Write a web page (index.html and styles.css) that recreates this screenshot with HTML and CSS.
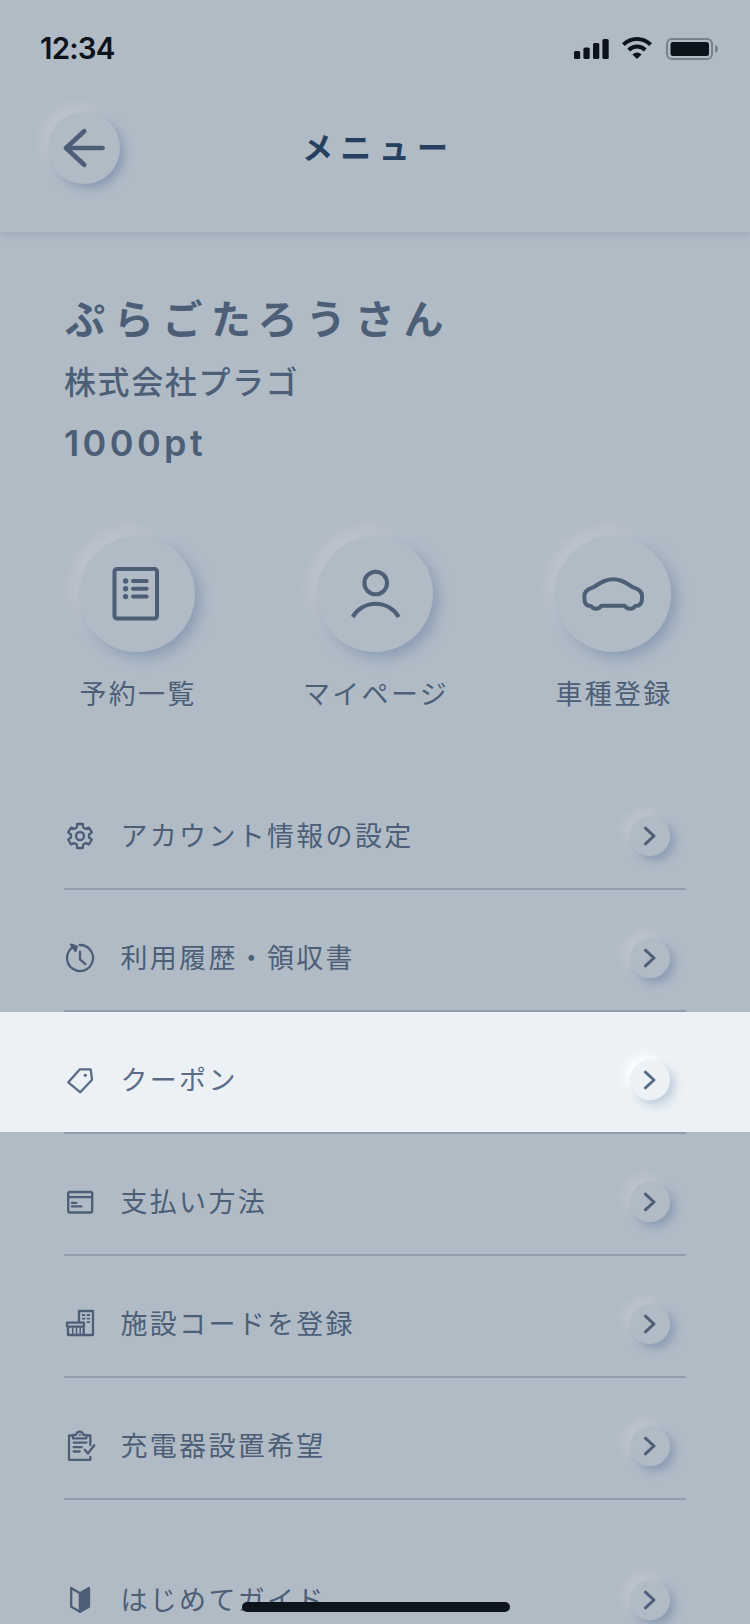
FILE: index.html
```html
<!DOCTYPE html>
<html lang="ja">
<head>
<meta charset="utf-8">
<title>メニュー</title>
<link rel="stylesheet" href="styles.css">
</head>
<body>
<svg class="defs" width="0" height="0" aria-hidden="true">
  <symbol id="chevron" viewBox="0 0 40 40"><path d="M15.4 12.2 24 20l-8.6 7.8" fill="none" stroke="currentColor" stroke-width="3" stroke-linecap="round" stroke-linejoin="round"/></symbol>
</svg>
<div class="screen">
  <header class="header">
    <div class="status">
      <span class="time">12:34</span>
      <svg class="status-icons" viewBox="0 0 144 24" fill="currentColor">
        <rect x="0" y="15" width="6.2" height="8" rx="1.6"/><rect x="9.4" y="11.5" width="6.3" height="11.5" rx="1.6"/><rect x="19" y="7" width="6.3" height="16" rx="1.6"/><rect x="28.4" y="3" width="6.3" height="20" rx="1.6"/>
        <g fill="none" stroke="currentColor" stroke-width="4"><path d="M49.4 8.6Q55.3 3 63 3t13.600 5.600"/><path d="M54.700 14Q58.300 10.600 63 10.600t8.300 3.400"/></g>
        <path d="M58.400 18.600Q63 14.500 67.600 18.600L63 23z"/>
        <rect x="93" y="3" width="45" height="20" rx="5" fill="none" stroke="#78828e" stroke-width="2"/>
        <rect x="96.500" y="6" width="38.500" height="14" rx="2.500"/>
        <path d="M141 9q3 1.200 3 4t-3 4z" fill="#78828e"/>
      </svg>
    </div>
    <div class="nav">
      <button class="round back" aria-label="戻る"><svg viewBox="0 0 72 72"><path d="M54.600 36H18M36.200 19.200 18 36l18.200 16.800" fill="none" stroke="currentColor" stroke-width="4.700" stroke-linecap="round" stroke-linejoin="round"/></svg></button>
      <h1 class="title">メニュー</h1>
    </div>
  </header>

  <section class="profile">
    <p class="name">ぷらごたろうさん</p>
    <p class="company">株式会社プラゴ</p>
    <p class="points">1000pt</p>
  </section>

  <nav class="shortcuts">
    <a class="shortcut"><span class="round big"><svg viewBox="0 0 116 116" fill="none" stroke="currentColor" stroke-width="4" stroke-linecap="round"><rect x="35.500" y="33" width="42.500" height="49.500" rx="2.500"/><path d="M54 45h13.700M54 52.800h13.700M54 60.600h13.700"/><g fill="currentColor" stroke="none"><circle cx="46.600" cy="45" r="2.700"/><circle cx="46.600" cy="52.800" r="2.700"/><circle cx="46.600" cy="60.600" r="2.700"/></g></svg></span><span class="label">予約一覧</span></a>
    <a class="shortcut"><span class="round big"><svg viewBox="0 0 116 116" fill="none" stroke="currentColor" stroke-width="4"><circle cx="58.700" cy="47" r="11.300"/><path d="M35.700 81a26.500 26.500 0 0 1 46 0"/></svg></span><span class="label">マイページ</span></a>
    <a class="shortcut"><span class="round big"><svg viewBox="0 0 116 116" fill="none" stroke="currentColor" stroke-width="4" stroke-linejoin="round"><path d="M46.500 69.700H69.500L71.300 71.500Q75.200 74 79 71.500L80.300 70Q87 70 87 62.500V60Q87 54.300 79 51.700C75 50.500 69.500 43.300 58.200 43.300S41.400 50.500 37.400 51.700Q29.400 54.300 29.400 60V62.500Q29.400 70 36 70L37.300 71.500Q41 74 44.700 71.500Z"/></svg></span><span class="label">車種登録</span></a>
  </nav>

  <ul class="menu">
    <li class="item"><svg class="icon" viewBox="0 0 32 32"><g transform="translate(16 16)"><path d="M-3.200-8.600-2.800-12H2.800L3.200-8.600 5.850-7.070 8.990-8.420 11.790-3.580 9.050-1.530V1.530L11.790 3.580 8.990 8.420 5.850 7.070 3.200 8.600 2.800 12H-2.800L-3.200 8.600-5.850 7.070-8.990 8.420-11.790 3.580-9.050 1.530V-1.530L-11.790-3.580-8.990-8.420-5.850-7.070Z"/><circle r="4"/></g></svg><span class="text">アカウント情報の設定</span><span class="round go"><svg><use href="#chevron"/></svg></span></li>
    <li class="item"><svg class="icon" viewBox="0 0 32 32"><path d="M15.600 3A13 13 0 1 1 8.500 5.400M16 9.700v7.600l5.400 4.800"/><path d="M7 2.700l5.800 1.800-1.300 4.300z" fill="currentColor"/></svg><span class="text">利用履歴・領収書</span><span class="round go"><svg><use href="#chevron"/></svg></span></li>
    <li class="item active"><svg class="icon" viewBox="0 0 32 32"><path d="M4.300 18.300 15.700 5.400H26.700L28 15.700 16.300 28.300Z"/><circle cx="21.300" cy="11.300" r="1.600" fill="currentColor" stroke="none"/></svg><span class="text">クーポン</span><span class="round go"><svg><use href="#chevron"/></svg></span></li>
    <li class="item"><svg class="icon" viewBox="0 0 32 32"><rect x="4.200" y="6" width="24" height="20.500" rx="1.500"/><path d="M4 11.200h24M7.800 16.800h4.500M7.800 20.400h9.600"/></svg><span class="text">支払い方法</span><span class="round go"><svg><use href="#chevron"/></svg></span></li>
    <li class="item"><svg class="icon" viewBox="0 0 32 32"><path d="M15 14V3H29V27H4V18.700M3 14.600H20V18.600H3ZM19.700 19V27"/><path d="M8.700 19v8M12.500 19v8M16.200 19v8" stroke-width="1.500"/><path d="M18 7h3.200M22.800 7H26M18 10.600h3.200M22.800 10.600H26M22.800 14.200H26" stroke-width="1.800" stroke-linecap="butt"/></svg><span class="text">施設コードを登録</span><span class="round go"><svg><use href="#chevron"/></svg></span></li>
    <li class="item"><svg class="icon" viewBox="0 0 32 32"><path d="M8.500 5.500H5V29.800H26.300V26.800M23 5.500H26.300V15M9 8.400V4.800H12.200Q12.800 1.600 15.700 1.600T19.200 4.800H22.300V8.400ZM9.700 12.700h12.700M9.700 17.200h8M9.700 21.500h6M20.700 19.800l3.200 3.700 6.400-8.200"/><circle cx="15.700" cy="5" r=".7" stroke-width="1"/></svg><span class="text">充電器設置希望</span><span class="round go"><svg><use href="#chevron"/></svg></span></li>
    <li class="item last"><svg class="icon" viewBox="0 0 32 32"><path d="M7.200 4 16 9.200V27.700L7.200 22.700Z"/><path d="M16 9.200 25 4V22.700L16 27.700Z" fill="currentColor"/></svg><span class="text">はじめてガイド</span><span class="round go"><svg><use href="#chevron"/></svg></span></li>
  </ul>
  <div class="home-indicator"></div>
</div>
</body>
</html>
```
FILE: styles.css
```css
:root {
  --bg: #b1bbc6;
  --ink: #4c5f77;
  --line: #8f9ead;
  --shade: #8b9db4;
  --glow: #c1c6cf;
}
* { box-sizing: border-box; }
body {
  margin: 0;
  background: var(--bg);
  color: var(--ink);
  font-family: "Noto Sans CJK JP", sans-serif;
}
h1, p, ul { margin: 0; padding: 0; }
svg { display: block; }
.defs { position: absolute; }
.screen {
  position: relative;
  width: 750px;
  height: 1624px;
  overflow: hidden;
}
.header {
  height: 232px;
  box-shadow: 0 4px 6px #a2aebe;
}
.status {
  display: flex;
  justify-content: space-between;
  height: 96px;
  padding: 0 32px 0 40px;
  align-items: center;
  color: #0c131b;
}
.time {
  margin-top: -1px;
  font: 600 29.5px/36px Inter, sans-serif;
  letter-spacing: -0.8px;
}
.status-icons { width: 144px; height: 24px; }
.nav {
  display: grid;
  grid-template-columns: 72px 1fr 72px;
  align-items: center;
  padding: 16px 48px 0;
}
.title {
  margin-top: -4px;
  color: #26405f;
  font-size: 31px;
  font-weight: 700;
  line-height: 48px;
  letter-spacing: 7.4px;
  text-indent: 7.4px;
  text-align: center;
}
.round {
  display: block;
  flex: none;
  border: 0;
  padding: 0;
  border-radius: 50%;
  background: var(--bg);
  color: inherit;
}
.round svg { width: 100%; height: 100%; }
.back {
  width: 72px;
  height: 72px;
  box-shadow: 5px 5px 10px var(--shade), -5px -5px 12px var(--glow);
}
.profile { padding: 55px 64px 0; }
.name {
  padding-left: 1px;
  font-size: 40px;
  font-weight: 600;
  line-height: 60px;
  letter-spacing: 8.7px;
}
.company {
  margin-top: 13px;
  font-size: 32px;
  font-weight: 500;
  line-height: 40px;
  letter-spacing: 0.05em;
}
.points {
  margin-top: 23px;
  font: 600 36px/40px Inter, sans-serif;
  letter-spacing: 3.4px;
}
.shortcuts {
  display: flex;
  justify-content: space-between;
  padding: 73px 56px 0;
}
.shortcut {
  display: flex;
  flex-direction: column;
  align-items: center;
  width: 162px;
}
.big {
  width: 116px;
  height: 116px;
  box-shadow: 6px 6px 14px var(--shade), -6px -6px 14px var(--glow);
}
.label {
  margin-top: 21px;
  padding-left: 2px;
  font-size: 27px;
  line-height: 40px;
  letter-spacing: 2.3px;
  white-space: nowrap;
}
.menu {
  padding-top: 55px;
  list-style: none;
}
.item {
  display: flex;
  align-items: center;
  height: 120px;
  margin-bottom: 2px;
  padding: 16px 80px 0 64px;
  position: relative;
}
.item::after {
  content: "";
  position: absolute;
  left: 64px;
  right: 64px;
  top: 100%;
  height: 2px;
  background: var(--line);
}
.icon {
  flex: none;
  width: 32px;
  height: 32px;
  fill: none;
  stroke: currentColor;
  stroke-width: 2.3;
  stroke-linecap: round;
  stroke-linejoin: round;
}
.text {
  flex: 1;
  padding-left: 24.5px;
  margin-top: -2px;
  font-size: 27px;
  line-height: 40px;
  letter-spacing: 2.3px;
}
.go {
  width: 40px;
  height: 40px;
  box-shadow: 5px 5px 10px var(--shade), -5px -5px 12px var(--glow);
}
.active {
  --bg: #ecf1f5;
  --shade: #c0cede;
  --glow: #ffffff;
  background: var(--bg);
  color: #5b6c86;
}
.last { margin-top: 34px; }
.last::after { display: none; }
.home-indicator {
  position: absolute;
  left: 242px;
  bottom: 12px;
  width: 268px;
  height: 10px;
  border-radius: 5px;
  background: #0c131b;
}
```
